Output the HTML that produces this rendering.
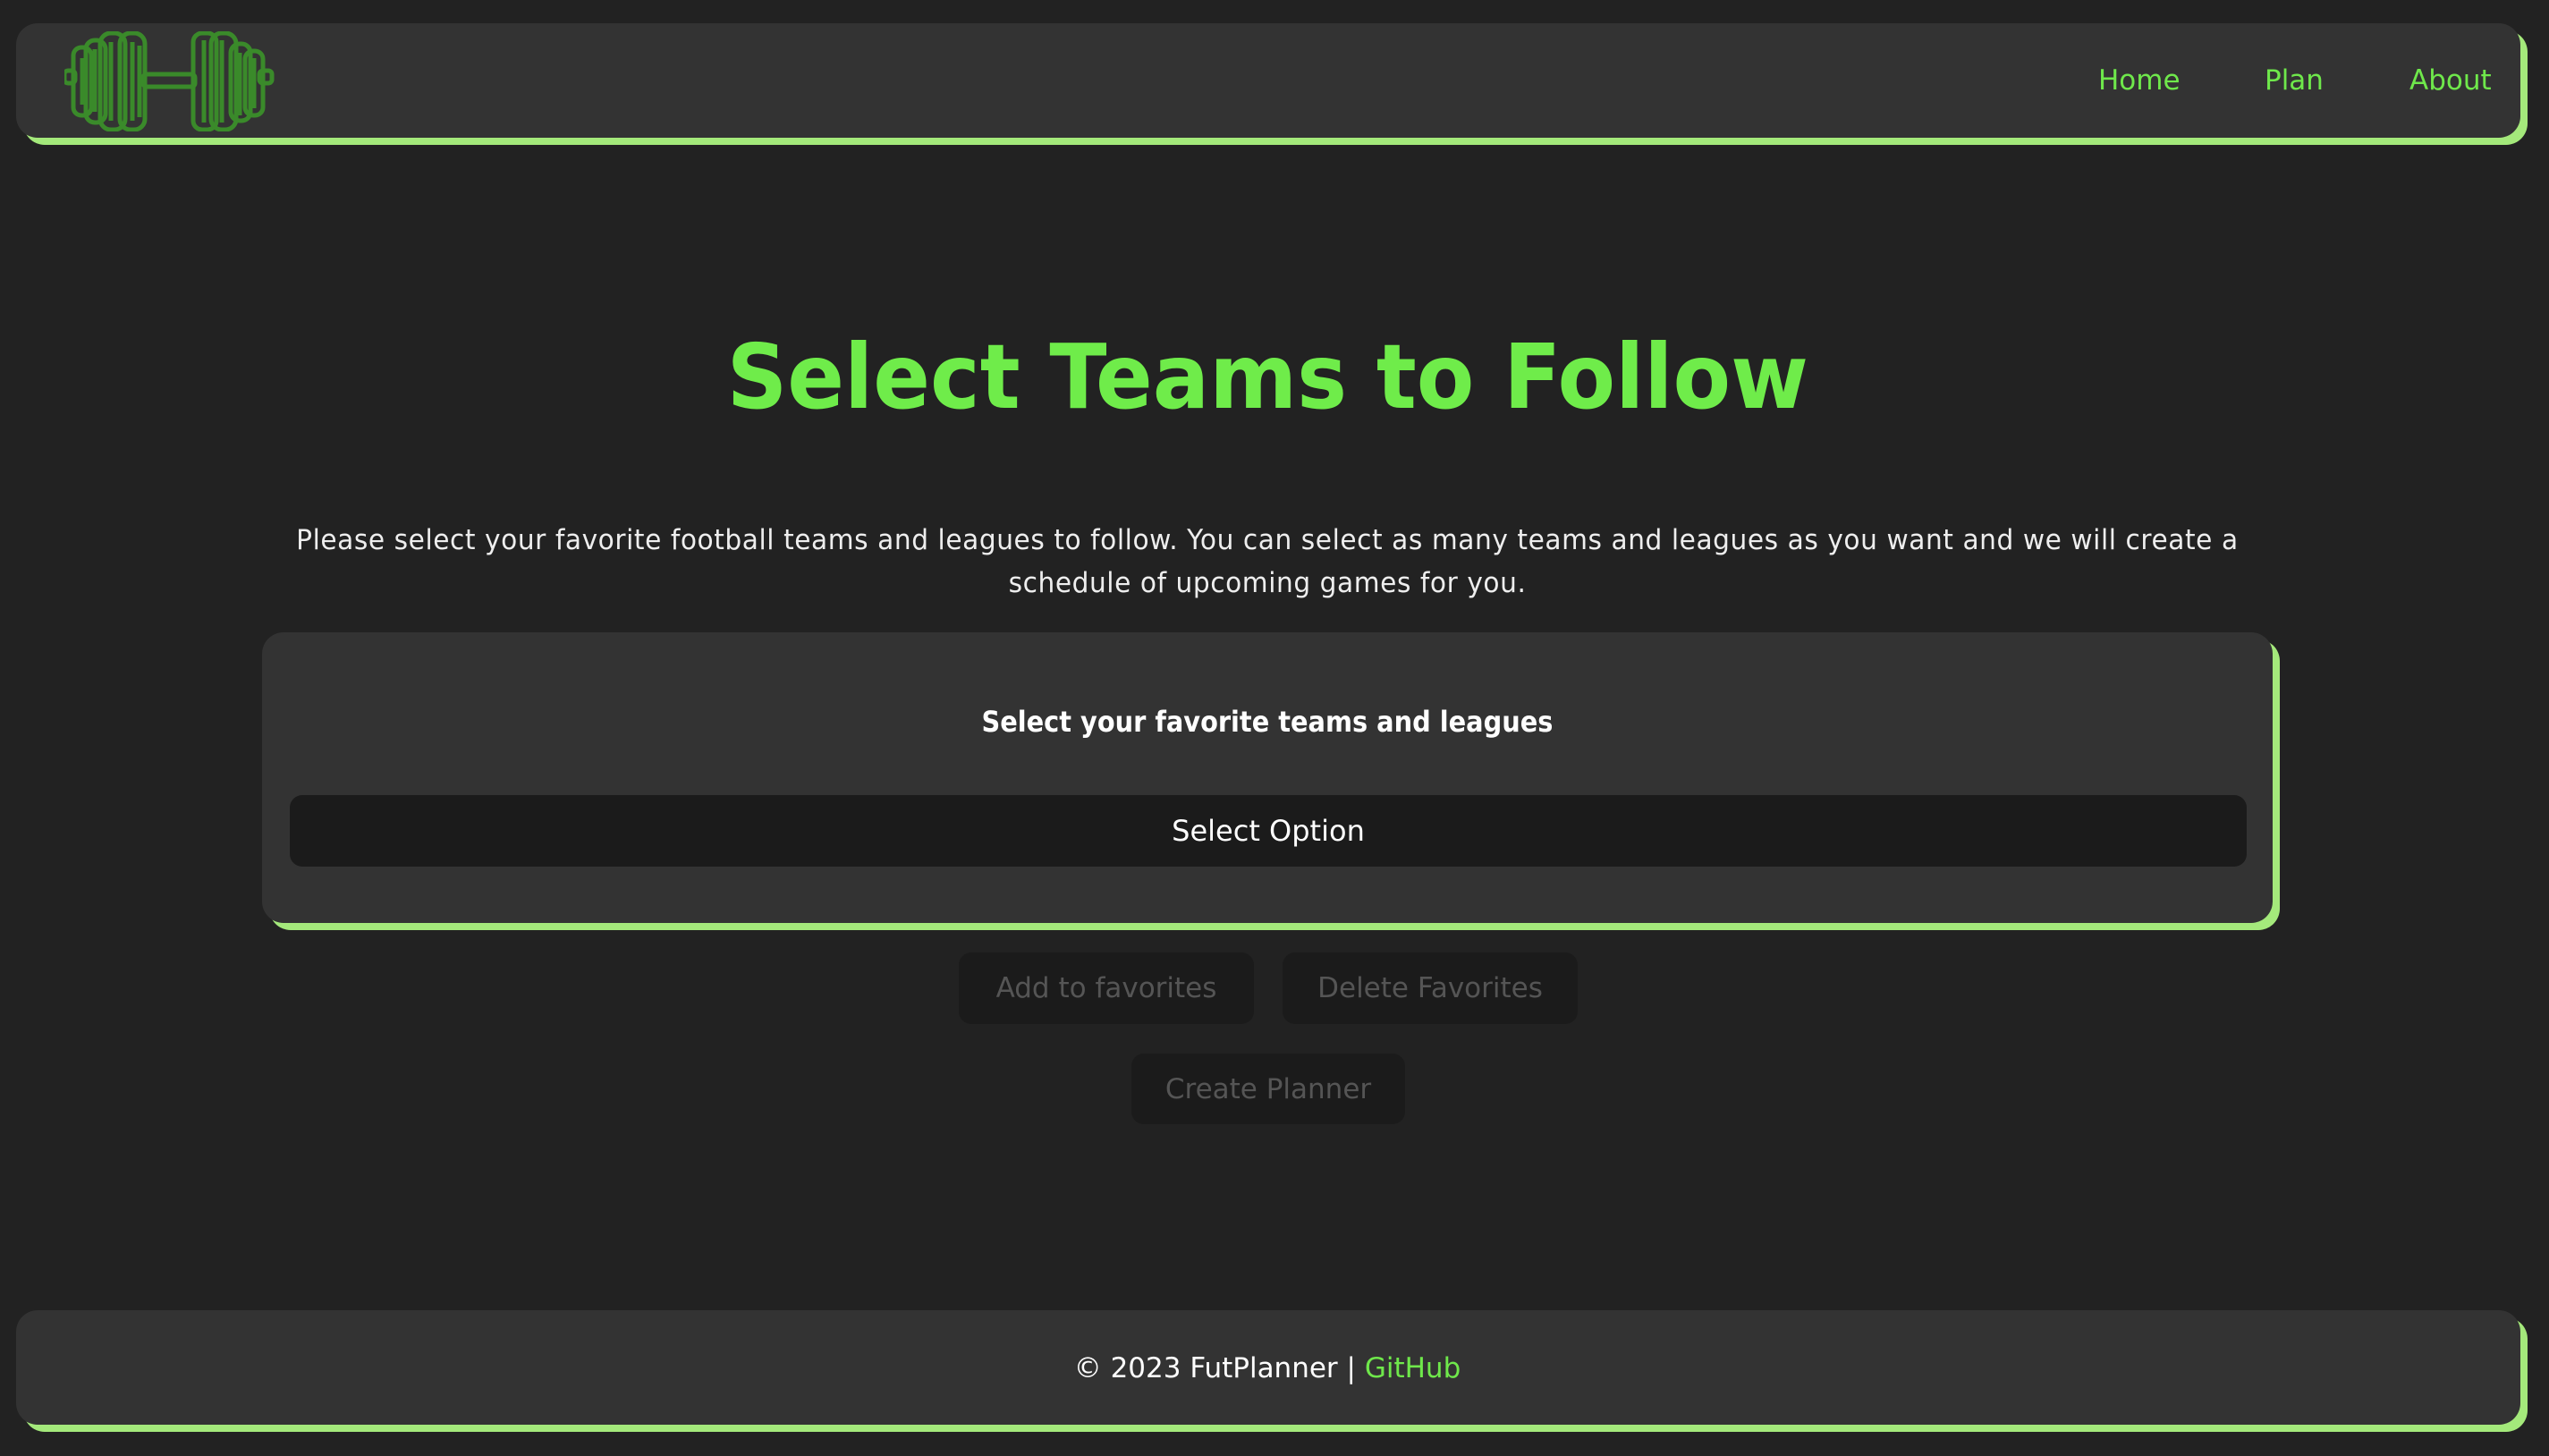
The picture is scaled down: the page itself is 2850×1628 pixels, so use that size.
<!DOCTYPE html>
<html><head><meta charset="utf-8"><style>
html,body{margin:0;padding:0}
body{width:2850px;height:1628px;background:#222;position:relative;overflow:hidden;font-family:"DejaVu Sans","Liberation Sans",sans-serif}
.bar{position:absolute;background:#333;border-radius:24px;box-shadow:8px 8px 0 #a4e97b}
.c{position:absolute;left:-8px;width:2850px;text-align:center;white-space:nowrap}
.c span{display:inline-block}
.nav{position:absolute;top:72px;color:#6fe84b;font-size:31px;white-space:nowrap}
.btn{position:absolute;background:#1b1b1b;border-radius:14px;color:#555;font-size:31px;display:flex;align-items:center;justify-content:center}
</style></head><body>
<div class="bar" style="left:18px;top:26px;width:2800px;height:128px"></div>
<svg style="position:absolute;left:72px;top:35px" width="236" height="112" viewBox="0 0 236 112" fill="none" stroke="#3a8a2a" stroke-width="5">
<rect x="0" y="44" width="12" height="14" rx="4"/>
<rect x="10" y="18" width="20" height="76" rx="9"/>
<rect x="24" y="10" width="22" height="92" rx="10"/>
<rect x="40" y="2" width="28" height="108" rx="12"/>
<rect x="62" y="2" width="28" height="108" rx="12"/>
<path d="M20 30v52M34 20v70M52 12v88M76 12v88M84 16v80"/>
<rect x="88" y="48" width="58" height="14" rx="4"/>
<rect x="144" y="2" width="26" height="108" rx="10"/>
<rect x="164" y="2" width="28" height="108" rx="12"/>
<rect x="186" y="14" width="22" height="86" rx="10"/>
<rect x="202" y="22" width="20" height="72" rx="9"/>
<rect x="218" y="44" width="14" height="14" rx="4"/>
<path d="M156 10v92M176 10v92M196 24v70M212 30v56"/>
</svg>
<div class="nav" style="left:2346px">Home</div>
<div class="nav" style="left:2532px">Plan</div>
<div class="nav" style="left:2694px">About</div>

<div class="c" style="top:362px;color:#6fec4a;font-weight:bold;font-size:100px;line-height:120px"><span style="transform:scaleX(0.94)">Select Teams to Follow</span></div>
<div class="c" style="top:580px;color:#eee;font-size:31px;line-height:48px"><span style="transform:scaleX(0.955);letter-spacing:0.6px">Please select your favorite football teams and leagues to follow. You can select as many teams and leagues as you want and we will create a</span><br><span style="transform:scaleX(0.955);letter-spacing:0.6px">schedule of upcoming games for you.</span></div>

<div class="bar" style="left:293px;top:707px;width:2248px;height:325px"></div>
<div class="c" style="top:785px;color:#fff;font-weight:bold;font-size:32px;line-height:44px"><span style="transform:scaleX(0.9)">Select your favorite teams and leagues</span></div>
<div class="btn" style="left:324px;top:889px;width:2188px;height:80px;color:#fff;font-size:32px">Select Option</div>

<div class="btn" style="left:1072px;top:1065px;width:330px;height:80px">Add to favorites</div>
<div class="btn" style="left:1434px;top:1065px;width:330px;height:80px">Delete Favorites</div>
<div class="btn" style="left:1265px;top:1178px;width:306px;height:79px">Create Planner</div>

<div class="bar" style="left:18px;top:1465px;width:2800px;height:128px"></div>
<div class="c" style="top:1508px;color:#fff;font-size:31px;line-height:44px">© 2023 FutPlanner | <span style="color:#6fe84b">GitHub</span></div>
</body></html>
